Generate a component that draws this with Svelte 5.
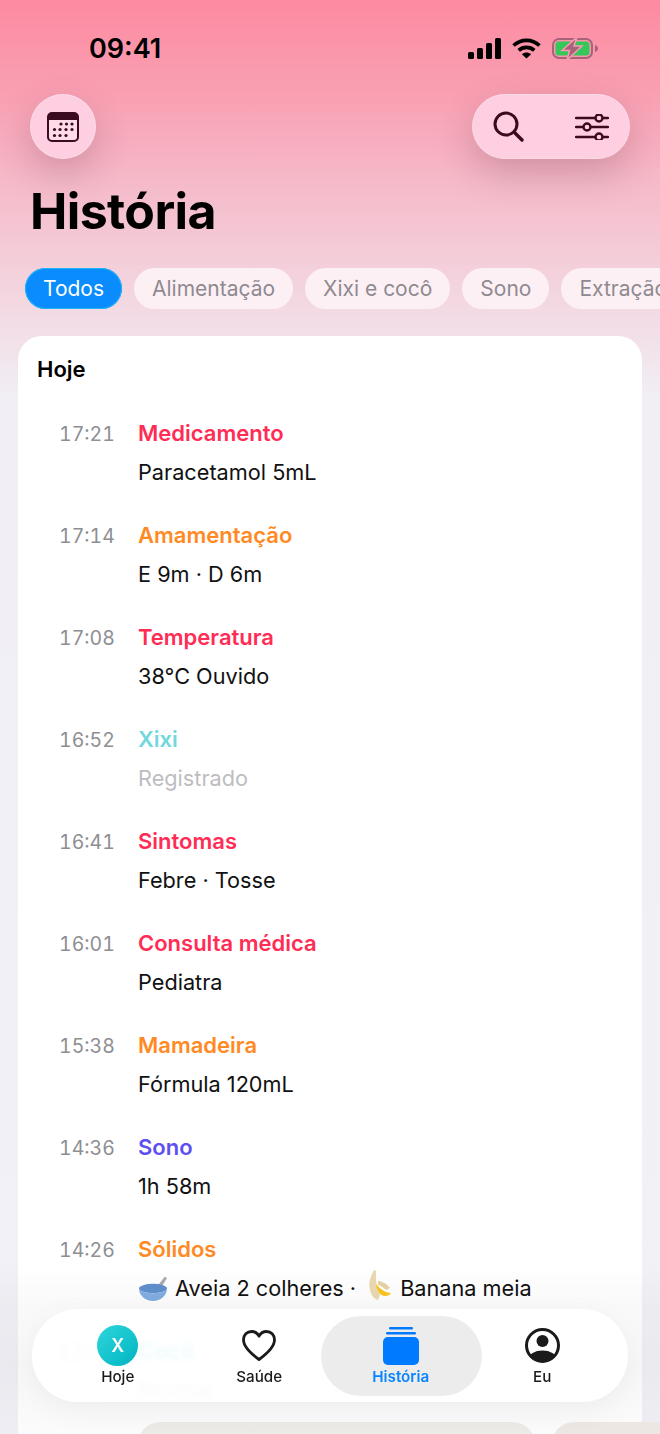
<script>
    const chips = [
        { label: 'Todos', active: true },
        { label: 'Alimentação' },
        { label: 'Xixi e cocô' },
        { label: 'Sono' },
        { label: 'Extração' },
    ];

    const events = [
        { time: '17:21', title: 'Medicamento', detail: 'Paracetamol 5mL', tone: 'red' },
        { time: '17:14', title: 'Amamentação', detail: 'E 9m · D 6m', tone: 'orange' },
        { time: '17:08', title: 'Temperatura', detail: '38°C Ouvido', tone: 'red' },
        { time: '16:52', title: 'Xixi', detail: 'Registrado', tone: 'cyan', muted: true },
        { time: '16:41', title: 'Sintomas', detail: 'Febre · Tosse', tone: 'red' },
        { time: '16:01', title: 'Consulta médica', detail: 'Pediatra', tone: 'red' },
        { time: '15:38', title: 'Mamadeira', detail: 'Fórmula 120mL', tone: 'orange' },
        { time: '14:36', title: 'Sono', detail: '1h 58m', tone: 'purple' },
    ];
</script>

<div class="page">
    <div class="status">
        <span class="clock">09:41</span>
        <div class="status-icons">
            <svg width="33" height="21" viewBox="0 0 33 21" fill="#000">
                <rect x="0" y="14" width="6" height="7" rx="1.5" />
                <rect x="9" y="10" width="6" height="11" rx="1.5" />
                <rect x="18" y="5" width="6" height="16" rx="1.5" />
                <rect x="27" y="0" width="6" height="21" rx="1.5" />
            </svg>
            <svg width="29" height="21" viewBox="0 0 29 21" fill="none" stroke="#000" stroke-width="3.6">
                <path d="M1.5 7.5C8.8 .6 20.2 .6 27.5 7.5" />
                <path d="M6.7 12.4C11 8.4 18 8.4 22.3 12.4" />
                <path d="M14.5 20.6 9.9 16.2C12.500 14 16.500 14 19.1 16.2Z" fill="#000" stroke="none" />
            </svg>
            <svg width="46" height="21" viewBox="0 0 46 21">
                <rect x="1" y="1" width="39" height="19" rx="6" fill="none" stroke="#a8637a" stroke-width="2" />
                <rect x="3.500" y="3.500" width="34" height="14" rx="3.500" fill="#34c759" />
                <path d="M43 7c2 .5 3 2 3 3.500s-1 3-3 3.500z" fill="#a8637a" />
                <path d="M25 -1 10 12.500h7.500L15 22 30 8h-8z" fill="#a8637a" stroke="#f79bb0" stroke-width="1.500" />
            </svg>
        </div>
    </div>

    <div class="toolbar">
        <button class="glass round" aria-label="Calendário">
            <svg width="32" height="30" viewBox="0 0 32 30">
                <rect x="1" y="1" width="30" height="28" rx="4" fill="#ffdbe8" stroke="#3a0a1f" stroke-width="2" />
                <path d="M1 8V5a4 4 0 0 1 4-4h22a4 4 0 0 1 4 4v3z" fill="#3a0a1f" />
                <g fill="#3a0a1f">
                    <circle cx="14" cy="12" r="1.600" /><circle cx="19.500" cy="12" r="1.600" /><circle cx="25" cy="12" r="1.600" />
                    <circle cx="7.500" cy="17.500" r="1.600" /><circle cx="13" cy="17.500" r="1.600" /><circle cx="19" cy="17.500" r="1.600" /><circle cx="25" cy="17.500" r="1.600" />
                    <circle cx="7.500" cy="23.500" r="1.600" /><circle cx="13" cy="23.500" r="1.600" /><circle cx="19" cy="23.500" r="1.600" />
                </g>
            </svg>
        </button>
        <div class="glass pill">
            <svg width="31" height="31" viewBox="0 0 31 31" fill="none" stroke="#3a0a1f" stroke-width="3" stroke-linecap="round">
                <circle cx="13" cy="13" r="11" />
                <path d="M21.500 21.500 29 29" stroke-width="3.400" />
            </svg>
            <svg width="34" height="26" viewBox="0 0 34 26" fill="none" stroke="#3a0a1f" stroke-width="2.400" stroke-linecap="round">
                <path d="M1 4h19M28 4h5M1 13h7M16 13h17M1 23h19M28 23h5" />
                <circle cx="24" cy="4" r="3.500" />
                <circle cx="12" cy="13" r="3.500" />
                <circle cx="24" cy="23" r="3.500" />
            </svg>
        </div>
    </div>

    <h1>História</h1>

    <div class="chips">
        {#each chips as chip}
            <span class="chip" class:active={chip.active}>{chip.label}</span>
        {/each}
    </div>

    <section class="card">
        <h2>Hoje</h2>
        {#each events as ev}
            <div class="row">
                <span class="time">{ev.time}</span>
                <div>
                    <div class="title {ev.tone}">{ev.title}</div>
                    <div class="detail" class:muted={ev.muted}>{ev.detail}</div>
                </div>
            </div>
        {/each}

        <div class="row">
            <span class="time">14:26</span>
            <div>
                <div class="title orange">Sólidos</div>
                <div class="detail foods">
                    <svg width="30" height="27" viewBox="0 0 29 26">
                        <path d="M17 13 26 1.500l2 1.500-7 11z" fill="#a9a9b2" />
                        <ellipse cx="14.500" cy="13" rx="13.500" ry="4.500" fill="#5f90cc" />
                        <path d="M1 14c.5 6 6 11 13.500 11S27.500 20 28 14c-3 2.500-8 3.500-13.500 3.500S4 16.500 1 14z" fill="#83aee3" />
                    </svg>
                    <span>Aveia 2 colheres ·</span>
                    <svg class="banana" width="28" height="34" viewBox="0 0 28 32">
                        <path d="M10 0c-3 6-6 12-4 20 1 5 4 9 8 10l2-5C12 18 12 9 12 1z" fill="#ead9b0" />
                        <path d="M14 11c3 0 8 2 12 7l-4 2c-3-3-6-5-8-5z" fill="#e6d2a2" />
                        <path d="M12 14c1 7 4 12 9 12 3 0 5-1 6-3-5 0-10-3-15-9z" fill="#f8c61e" />
                    </svg>
                    <span>Banana meia</span>
                </div>
            </div>
        </div>

        <div class="row ghost">
            <span class="time">13:47</span>
            <div>
                <div class="title">Cocô</div>
                <div class="detail">Normal</div>
            </div>
        </div>

        <div class="thumbs">
            <div class="thumb wide"></div>
            <div class="thumb"></div>
        </div>
    </section>

    <div class="fade"></div>

    <nav class="tabbar">
        <div class="tab">
            <div class="tab-icon"><span class="avatar">X</span></div>
            <span>Hoje</span>
        </div>
        <div class="tab">
            <div class="tab-icon">
                <svg width="34" height="31" viewBox="0 0 34 31" fill="none" stroke="#1a1a1a" stroke-width="2.800" stroke-linejoin="round">
                    <path d="M17 29.500C8 23 1.500 17 1.500 9.800 1.500 5 5 1.500 9.500 1.500c3.200 0 5.900 1.700 7.500 4.700 1.600-3 4.300-4.700 7.500-4.700 4.500 0 8 3.500 8 8.300C32.500 17 26 23 17 29.500z" />
                </svg>
            </div>
            <span>Saúde</span>
        </div>
        <div class="tab active">
            <div class="tab-icon">
                <svg width="36" height="38" viewBox="0 0 36 38" fill="#007aff">
                    <rect x="6" y="0" width="24" height="2.500" rx="1.200" />
                    <rect x="3" y="5" width="30" height="2.500" rx="1.200" />
                    <rect x="0" y="10" width="36" height="28" rx="5" />
                </svg>
            </div>
            <span>História</span>
        </div>
        <div class="tab">
            <div class="tab-icon">
                <svg width="35" height="35" viewBox="0 0 35 35">
                    <defs>
                        <clipPath id="face"><circle cx="17.500" cy="17.500" r="15.500" /></clipPath>
                    </defs>
                    <circle cx="17.500" cy="17.500" r="16" fill="#fff" stroke="#1a1a1a" stroke-width="3" />
                    <circle cx="17.500" cy="13" r="6" fill="#1a1a1a" />
                    <ellipse cx="17.500" cy="31" rx="14" ry="8.500" fill="#1a1a1a" clip-path="url(#face)" />
                </svg>
            </div>
            <span>Eu</span>
        </div>
    </nav>
</div>

<style>
    :global(body) {
        margin: 0;
        font-family: Inter, 'Liberation Sans', sans-serif;
        background: #f1f1f7;
    }

    .page {
        position: relative;
        width: 660px;
        height: 1434px;
        overflow: hidden;
        background: linear-gradient(180deg, #fd8aa1 0, #f9a1b4 100px, #f5bccb 190px, #f3d5df 290px, #f1eff5 400px, #f1f1f7 100%);
    }

    .status {
        display: flex;
        justify-content: space-between;
        align-items: center;
        height: 21px;
        padding: 38px 62px 0 89px;
    }

    .clock {
        font-size: 27px;
        font-weight: 600;
        color: #000;
    }

    .status-icons {
        display: flex;
        gap: 11px;
    }

    .toolbar {
        display: flex;
        justify-content: space-between;
        padding: 35px 30px 0;
    }

    .glass {
        display: flex;
        align-items: center;
        height: 65px;
        box-sizing: border-box;
        background: #fdcfe0;
        border: 1px solid #fddbe7;
        box-shadow: 0 14px 36px rgba(90, 40, 60, 0.24);
        padding: 0;
    }

    .round {
        width: 66px;
        justify-content: center;
        border-radius: 50%;
    }

    .pill {
        width: 158px;
        justify-content: space-between;
        padding: 0 20px;
        border-radius: 33px;
    }

    h1 {
        margin: 22px 0 0 30px;
        font-size: 50px;
        line-height: 60px;
        font-weight: 700;
        letter-spacing: -0.6px;
        color: #000;
    }

    .chips {
        display: flex;
        gap: 12px;
        margin: 27px 0 0 25px;
    }

    .chip {
        flex: none;
        height: 41px;
        line-height: 41px;
        padding: 0 18px;
        border-radius: 21px;
        font-size: 21px;
        background: #fdf0f5;
        color: #8e8a90;
    }

    .chip.active {
        background: #0a8cff;
        color: #fff;
        box-shadow: inset 0 0 0 1px #22b5f5;
    }

    .card {
        margin: 27px 18px 0;
        padding: 19px 19px 0;
        background: #fff;
        border-radius: 24px;
        height: 1200px;
    }

    h2 {
        margin: 0 0 34px;
        font-size: 22px;
        line-height: 28px;
        font-weight: 600;
        color: #000;
    }

    .row {
        display: grid;
        grid-template-columns: 101px 1fr;
        height: 102px;
    }

    .time {
        padding: 3px 0 0 22px;
        font-size: 19.500px;
        line-height: 28px;
        font-variant-numeric: tabular-nums;
        color: #8e8e93;
    }

    .title {
        font-size: 22px;
        line-height: 32px;
        font-weight: 600;
    }

    .detail {
        margin-top: 7px;
        font-size: 21.700px;
        line-height: 32px;
        color: #111;
    }

    .muted {
        color: #bdbdc1;
    }

    .foods {
        display: flex;
        align-items: center;
        gap: 7px;
        white-space: nowrap;
    }

    .banana {
        margin: -5px 1px 0;
    }

    .red { color: #ff2d55; }
    .orange { color: #ff8a24; }
    .cyan { color: #72d8de; }
    .purple { color: #5e4ff0; }

    /* this row only shows through the tab bar */
    .ghost .time,
    .ghost .detail {
        color: #d8d8dc;
    }

    .ghost .title {
        color: #4fe3f2;
    }

    .thumbs {
        display: flex;
        gap: 17px;
        margin: -15px 0 0 101px;
    }

    .thumb {
        flex: none;
        width: 160px;
        height: 120px;
        border-radius: 22px;
        background: #f0ebe7;
    }

    .thumb.wide {
        width: 397px;
        background: #efeeea;
    }

    .fade {
        position: absolute;
        left: 0;
        right: 0;
        bottom: 0;
        height: 169px;
        background: linear-gradient(180deg, rgba(0, 0, 0, 0) 0, rgba(0, 0, 0, 0.025) 40px, rgba(0, 0, 0, 0.03) 60%, rgba(0, 0, 0, 0.015) 100%);
    }

    .tabbar {
        position: absolute;
        left: 32px;
        top: 1309px;
        width: 596px;
        height: 93px;
        box-sizing: border-box;
        padding: 14px 15px 0;
        display: grid;
        grid-template-columns: repeat(4, 1fr);
        border-radius: 46px;
        background: rgba(255, 255, 255, 0.9);
        backdrop-filter: blur(2px);
        box-shadow: 0 8px 30px rgba(0, 0, 0, 0.05);
    }

    .tab {
        position: relative;
        display: flex;
        flex-direction: column;
        align-items: center;
        font-size: 15.200px;
        line-height: 18px;
        font-weight: 500;
        color: #1a1a1a;
    }

    .tab > * {
        position: relative;
    }

    .tab-icon {
        display: flex;
        align-items: center;
        justify-content: center;
        height: 45px;
    }

    .tab.active {
        color: #0a84ff;
        font-weight: 600;
    }

    .tab.active::before {
        content: '';
        position: absolute;
        left: -9px;
        right: -10px;
        top: -7px;
        height: 80px;
        border-radius: 40px;
        background: #ececec;
    }

    .avatar {
        display: flex;
        align-items: center;
        justify-content: center;
        width: 41px;
        height: 41px;
        border-radius: 50%;
        background: linear-gradient(135deg, #2fd6dc, #00b4c0);
        color: #fff;
        font-size: 18px;
        font-weight: 600;
    }
</style>
